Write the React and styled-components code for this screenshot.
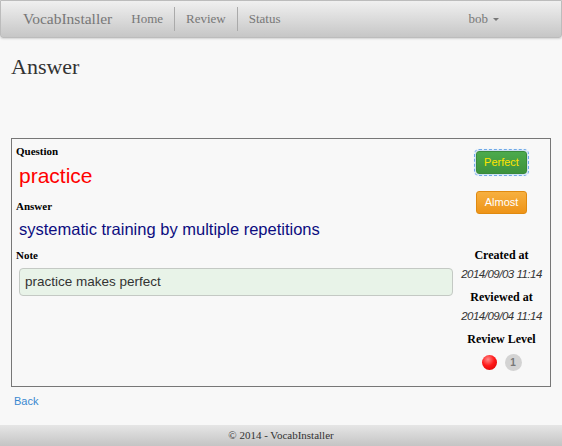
import styled, { createGlobalStyle } from 'styled-components'

const Global = createGlobalStyle`
  html, body {
    margin: 0;
    padding: 0;
    background: #f8f8f8;
    font-family: "Liberation Serif", "Times New Roman", serif;
    color: #333;
  }
`

const Page = styled.div`
  width: 562px;
  height: 446px;
  display: flex;
  flex-direction: column;
  overflow: hidden;
`

const Navbar = styled.div`
  height: 38px;
  box-sizing: border-box;
  display: flex;
  align-items: center;
  padding: 0 22px;
  background: linear-gradient(to bottom, #f0f0f0 0%, #c6c6c6 100%);
  border: 1px solid #bcbcbc;
  border-radius: 0 0 3px 3px;
  box-shadow: 0 1px 2px rgba(0, 0, 0, 0.15);
`

const Brand = styled.span`
  font-size: 15.5px;
  color: #777;
  margin-right: 8px;
`

const NavItem = styled.span`
  font-size: 13px;
  color: #777;
  padding: 0 11px;
  height: 24px;
  line-height: 24px;
  border-left: ${p => (p.$divider ? '1px solid #aaa' : 'none')};
`

const NavRight = styled.span`
  margin-left: auto;
  font-size: 13px;
  color: #777;
  display: flex;
  align-items: center;
  gap: 5px;
  padding-right: 40px;
`

const Caret = styled.span`
  width: 0;
  height: 0;
  border-left: 3px solid transparent;
  border-right: 3px solid transparent;
  border-top: 3px solid #777;
  margin-top: 1px;
`

const Main = styled.div`
  flex: 1;
  padding: 0 11px;
`

const Title = styled.h1`
  margin: 15px 0 58px;
  font-size: 22px;
  font-weight: normal;
  line-height: 27px;
  color: #333;
`

const Card = styled.div`
  width: 540px;
  height: 249px;
  box-sizing: border-box;
  border: 1px solid #777;
  display: flex;
  padding: 5px 4px 0 4px;
`

const Left = styled.div`
  flex: 1;
`

const Label = styled.div`
  font-size: 11px;
  font-weight: bold;
  color: #000;
  line-height: 14px;
  margin-top: ${p => p.$top || 0}px;
`

const Word = styled.div`
  font-family: "Liberation Sans", Arial, sans-serif;
  font-size: 21px;
  color: #f00;
  line-height: 24px;
  margin: 6px 0 0 3px;
`

const Meaning = styled.div`
  font-family: "Liberation Sans", Arial, sans-serif;
  font-size: 16.5px;
  color: #0d0d80;
  line-height: 19px;
  margin: 7px 0 0 3px;
`

const NoteBox = styled.div`
  margin: 6px 0 0 3px;
  width: 434px;
  height: 28px;
  box-sizing: border-box;
  background: #e8f3e8;
  border: 1px solid #c4c9c4;
  border-radius: 4px;
  font-family: "Liberation Sans", Arial, sans-serif;
  font-size: 13.5px;
  color: #333;
  padding: 0 5px;
  line-height: 26px;
`

const Right = styled.div`
  width: 94px;
  display: flex;
  flex-direction: column;
  align-items: center;
  padding-left: 4px;
`

const Button = styled.div`
  width: 51px;
  height: 23px;
  box-sizing: border-box;
  border-radius: 3px;
  font-family: "Liberation Sans", Arial, sans-serif;
  font-size: 11px;
  line-height: 21px;
  text-align: center;
  color: ${p => p.$text};
  background: ${p => p.$bg};
  border: 1px solid ${p => p.$border};
  margin-top: ${p => p.$top}px;
  outline: ${p => (p.$focus ? '1px dashed #6fa8e8' : 'none')};
  outline-offset: 1px;
  box-shadow: ${p => (p.$focus ? '0 0 3px #7fb6f0' : 'none')};
`

const MetaLabel = styled.div`
  font-size: 12px;
  font-weight: bold;
  color: #000;
  line-height: 15px;
  margin-top: ${p => p.$top}px;
`

const MetaValue = styled.div`
  font-family: "Liberation Sans", Arial, sans-serif;
  font-size: 11.5px;
  letter-spacing: -0.5px;
  font-style: italic;
  color: #333;
  line-height: 15px;
  margin-top: 4px;
`

const LevelRow = styled.div`
  display: flex;
  align-items: center;
  gap: 8px;
  margin-top: 7px;
`

const Dot = styled.span`
  width: 15px;
  height: 15px;
  border-radius: 50%;
  background: radial-gradient(circle at 40% 30%, #ff8a8a 0%, #ff1a1a 45%, #d00000 100%);
`

const Badge = styled.span`
  width: 17px;
  height: 17px;
  border-radius: 50%;
  background: #d3d3d3;
  color: #777;
  font-family: "Liberation Sans", Arial, sans-serif;
  font-size: 10px;
  font-weight: bold;
  line-height: 17px;
  text-align: center;
`

const BackLink = styled.a`
  display: block;
  margin: 8px 0 0 3px;
  font-family: "Liberation Sans", Arial, sans-serif;
  font-size: 11px;
  color: #3a88d0;
  text-decoration: none;
`

const Footer = styled.div`
  height: 21px;
  background: linear-gradient(to bottom, #e6e6e6 0%, #c4c4c4 100%);
  font-size: 11px;
  color: #333;
  text-align: center;
  line-height: 21px;
`

export default function App() {
  return (
    <Page>
      <Global />
      <Navbar>
        <Brand>VocabInstaller</Brand>
        <NavItem>Home</NavItem>
        <NavItem $divider>Review</NavItem>
        <NavItem $divider>Status</NavItem>
        <NavRight>
          bob <Caret />
        </NavRight>
      </Navbar>
      <Main>
        <Title>Answer</Title>
        <Card>
          <Left>
            <Label>Question</Label>
            <Word>practice</Word>
            <Label $top={11}>Answer</Label>
            <Meaning>systematic training by multiple repetitions</Meaning>
            <Label $top={9}>Note</Label>
            <NoteBox>practice makes perfect</NoteBox>
          </Left>
          <Right>
            <Button $top={7} $focus $bg="linear-gradient(#4caa4c, #3d923d)" $border="#3a8a3a" $text="#ffe400">
              Perfect
            </Button>
            <Button $top={17} $bg="linear-gradient(#f7b040, #ee9418)" $border="#e08a10" $text="#fff">
              Almost
            </Button>
            <MetaLabel $top={34}>Created at</MetaLabel>
            <MetaValue>2014/09/03 11:14</MetaValue>
            <MetaLabel $top={8}>Reviewed at</MetaLabel>
            <MetaValue>2014/09/04 11:14</MetaValue>
            <MetaLabel $top={8}>Review Level</MetaLabel>
            <LevelRow>
              <Dot />
              <Badge>1</Badge>
            </LevelRow>
          </Right>
        </Card>
        <BackLink href="#">Back</BackLink>
      </Main>
      <Footer>© 2014 - VocabInstaller</Footer>
    </Page>
  )
}
